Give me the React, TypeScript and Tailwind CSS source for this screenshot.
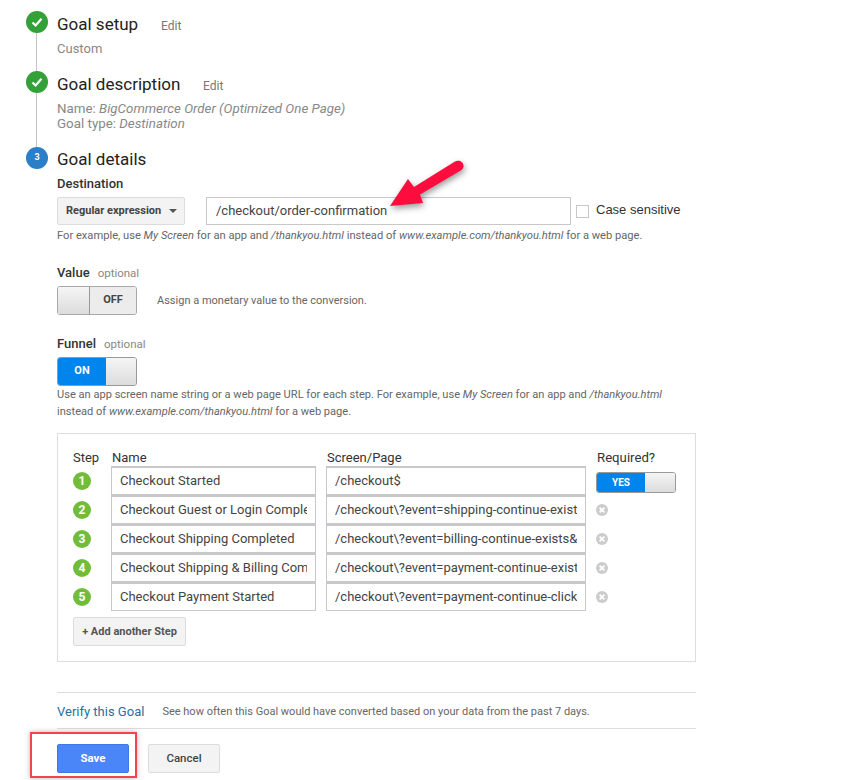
import React from "react";

function Check() {
  return (
    <div className="w-[22px] h-[22px] rounded-full bg-[#34a038] flex items-center justify-center shrink-0">
      <svg width="14" height="14" viewBox="0 0 14 14" fill="none">
        <path d="M2.5 7.5 L5.6 10.4 L11.5 3.8" stroke="#fff" strokeWidth="2.2" />
      </svg>
    </div>
  );
}

function Cross() {
  return (
    <svg width="12" height="12" viewBox="0 0 12 12">
      <circle cx="6" cy="6" r="6" fill="#cccccc" />
      <path d="M3.6 3.6 L8.4 8.4 M8.4 3.6 L3.6 8.4" stroke="#fff" strokeWidth="1.8" />
    </svg>
  );
}

const knob = "bg-gradient-to-b from-[#f5f5f5] to-[#dcdcdc]";

function Row({ n, name, page, first }: { n: number; name: string; page: string; first?: boolean }) {
  return (
    <div className="flex h-[29px] items-center">
      <div className="w-[38px] flex shrink-0">
        <div className="w-[18px] h-[18px] rounded-full bg-[#71bd3a] text-white text-[12px] font-bold flex items-center justify-center">
          {n}
        </div>
      </div>
      <input
        readOnly
        value={name}
        className="w-[205px] h-[29px] shrink-0 border border-[#c8c8c8] border-t-2 px-2 pb-[2px] text-[13px] text-[#444] outline-none"
      />
      <input
        readOnly
        value={page}
        className="w-[260px] h-[29px] shrink-0 ml-[10px] border border-[#c8c8c8] border-t-2 px-2 pb-[2px] text-[13px] text-[#444] outline-none"
      />
      <div className="ml-[10px] flex items-center">
        {first ? (
          <div className="mt-[4px] w-[80px] h-[21px] rounded-[3px] border border-[#999] flex overflow-hidden">
            <div className="w-[48px] bg-[#0084ed] text-white text-[10px] font-bold flex items-center justify-center">YES</div>
            <div className={`flex-1 ${knob}`} />
          </div>
        ) : (
          <Cross />
        )}
      </div>
    </div>
  );
}

export default function App() {
  return (
    <div className="relative w-[851px] h-[780px] bg-white overflow-hidden text-[#222] font-['Roboto',sans-serif]">
      <div className="absolute left-[36px] top-[30px] w-[1px] h-[118px] bg-[#c4c4c4]" />

      <div className="relative pl-[26px] pt-[11px]">
        <div className="flex items-center h-[22px]">
          <Check />
          <div className="ml-[9px] mt-[4px] text-[17px] leading-[22px] text-[#222] w-[104px]">Goal setup</div>
          <div className="text-[12px] text-[#777] mt-[8px]">Edit</div>
        </div>
        <div className="ml-[31px] mt-[7px] text-[13px] leading-[18px] text-[#888]">Custom</div>

        <div className="flex items-center h-[22px] mt-[13px]">
          <Check />
          <div className="ml-[9px] mt-[4px] text-[17px] leading-[22px] text-[#222] w-[146px]">Goal description</div>
          <div className="text-[12px] text-[#777] mt-[8px]">Edit</div>
        </div>
        <div className="ml-[31px] mt-[8px] text-[13.35px] leading-[15px] text-[#888]">
          <div>Name: <i>BigCommerce Order (Optimized One Page)</i></div>
          <div>Goal type: <i>Destination</i></div>
        </div>

        <div className="flex items-center h-[22px] mt-[16px]">
          <div className="w-[22px] h-[22px] rounded-full bg-[#2a7fc6] text-white text-[9px] font-bold flex items-center justify-center shrink-0">3</div>
          <div className="ml-[9px] mt-[2px] text-[17px] leading-[22px] text-[#222]">Goal details</div>
        </div>

        <div className="ml-[31px] w-[639px]">
          <div className="mt-[7px] text-[13px] leading-[16px] font-medium text-[#333]">Destination</div>
          <div className="flex items-center mt-[5px] h-[28px]">
            <div className="w-[128px] h-[28px] bg-[#f3f3f3] border border-[#dcdcdc] rounded-[2px] flex items-center pl-2 text-[11px] font-bold text-[#444]">
              Regular expression
              <svg className="ml-[8px]" width="8" height="4" viewBox="0 0 8 4"><path d="M0 0H8L4 4Z" fill="#555" /></svg>
            </div>
            <div className="ml-[21px] w-[365px] h-[28px] border border-[#c8c8c8] flex items-center pl-[9px] text-[13px] text-[#444]">
              /checkout/order-confirmation
            </div>
            <div className="ml-[5px] w-[13px] h-[13px] border border-[#c8c8c8]" />
            <div className="ml-[7px] mb-[2px] text-[13px] text-[#333] font-['Liberation_Sans',sans-serif]">Case sensitive</div>
          </div>
          <div className="mt-[2px] text-[11.15px] leading-[17px] text-[#666] whitespace-nowrap">
            For example, use <i>My Screen</i> for an app and <i>/thankyou.html</i> instead of <i>www.example.com/thankyou.html</i> for a web page.
          </div>

          <div className="mt-[21px] flex items-baseline h-[16px] leading-[16px]">
            <span className="text-[13px] font-medium text-[#333]">Value</span>
            <span className="ml-2 text-[11.5px] text-[#888]">optional</span>
          </div>
          <div className="flex items-center mt-[5px]">
            <div className="w-[80px] h-[29px] rounded-[3px] border border-[#a8a8a8] flex overflow-hidden">
              <div className={`w-[32px] border-r border-[#999] ${knob}`} />
              <div className="flex-1 bg-[#ececec] text-[11px] font-bold text-[#444] flex items-center justify-center">OFF</div>
            </div>
            <div className="ml-[20px] mt-[2px] text-[11px] text-[#666]">Assign a monetary value to the conversion.</div>
          </div>

          <div className="mt-[21px] flex items-baseline h-[16px] leading-[16px]">
            <span className="text-[13px] font-medium text-[#333]">Funnel</span>
            <span className="ml-2 text-[11.5px] text-[#888]">optional</span>
          </div>
          <div className="mt-[5px] w-[80px] h-[29px] rounded-[3px] border border-[#999] flex overflow-hidden">
            <div className="w-[48px] bg-[#0084ed] text-white text-[11px] font-bold flex items-center justify-center">ON</div>
            <div className={`flex-1 ${knob}`} />
          </div>
          <div className="text-[11.08px] leading-[17px] text-[#666] whitespace-nowrap">
            <div>Use an app screen name string or a web page URL for each step. For example, use <i>My Screen</i> for an app and <i>/thankyou.html</i></div>
            <div>instead of <i>www.example.com/thankyou.html</i> for a web page.</div>
          </div>

          <div className="mt-[13px] h-[229px] border border-[#ddd] pl-[15px] pt-[15px]">
            <div className="flex h-[17px] leading-[17px] text-[13px] text-[#333]">
              <div className="w-[39px]">Step</div>
              <div className="w-[215px]">Name</div>
              <div className="w-[270px]">Screen/Page</div>
              <div className="text-[13.2px]">Required?</div>
            </div>
            <Row n={1} name="Checkout Started" page="/checkout$" first />
            <Row n={2} name="Checkout Guest or Login Completed" page="/checkout\?event=shipping-continue-exists" />
            <Row n={3} name="Checkout Shipping Completed" page="/checkout\?event=billing-continue-exists&" />
            <Row n={4} name="Checkout Shipping & Billing Completed" page="/checkout\?event=payment-continue-exists" />
            <Row n={5} name="Checkout Payment Started" page="/checkout\?event=payment-continue-click" />
            <div className="mt-[6px] pt-[2px] w-[113px] h-[29px] bg-[#f3f3f3] border border-[#dcdcdc] rounded-[2px] flex items-center justify-center text-[11px] font-bold text-[#555]">
              + Add another Step
            </div>
          </div>

          <div className="mt-[30px] border-t border-b border-[#ddd] h-[37px] flex items-center">
            <span className="mt-[3px] text-[13px] text-[#2a6f9e]">Verify this Goal</span>
            <span className="ml-[18px] mt-[4px] text-[11px] text-[#666]">See how often this Goal would have converted based on your data from the past 7 days.</span>
          </div>

          <div className="flex mt-[15px]">
            <div className="w-[72px] h-[29px] rounded-[2px] bg-[#4a86f7] border border-[#3f78e0] text-white text-[11.5px] font-bold flex items-center justify-center">Save</div>
            <div className="ml-[19px] w-[72px] h-[29px] rounded-[2px] bg-[#f3f3f3] border border-[#dcdcdc] text-[#444] text-[11.5px] font-medium flex items-center justify-center">Cancel</div>
          </div>
        </div>
      </div>

      <div className="absolute left-[30px] top-[732px] w-[107px] h-[46px] border-2 border-[#f0454b] shadow-[0_0_5px_rgba(0,0,0,0.3)]" />

      <svg className="absolute left-[380px] top-[150px]" width="100" height="70" viewBox="0 0 100 70" style={{ filter: "drop-shadow(1px 3px 3px rgba(0,0,0,0.4))" }}>
        <path d="M10 56 L28 29 L34 37 L75 11.5 C79 9.5 84 12 83.5 16.5 C83 19 81.5 20 79 21.5 L40 44.5 L43 53 Z" fill="#fc0d3d" />
      </svg>
    </div>
  );
}
